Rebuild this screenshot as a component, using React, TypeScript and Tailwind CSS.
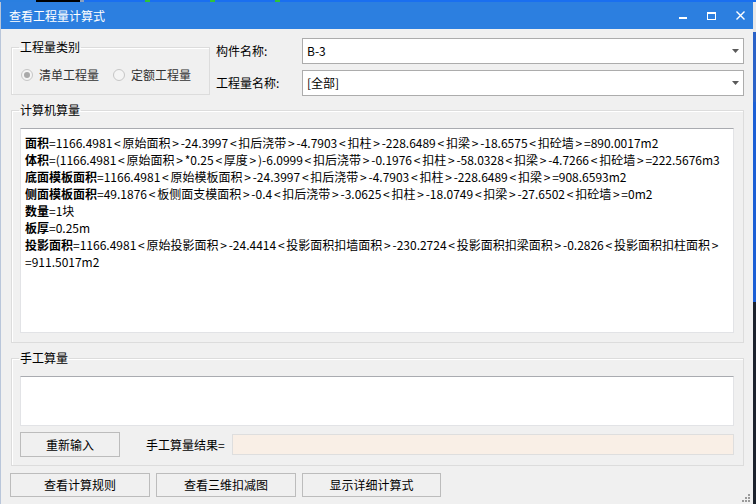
import React from "react";

const lines: [string, string][] = [
  ["面积", "=1166.4981<原始面积>-24.3997<扣后浇带>-4.7903<扣柱>-228.6489<扣梁>-18.6575<扣砼墙>=890.0017m2"],
  ["体积", "=(1166.4981<原始面积>*0.25<厚度>)-6.0999<扣后浇带>-0.1976<扣柱>-58.0328<扣梁>-4.7266<扣砼墙>=222.5676m3"],
  ["底面模板面积", "=1166.4981<原始模板面积>-24.3997<扣后浇带>-4.7903<扣柱>-228.6489<扣梁>=908.6593m2"],
  ["侧面模板面积", "=49.1876<板侧面支模面积>-0.4<扣后浇带>-3.0625<扣柱>-18.0749<扣梁>-27.6502<扣砼墙>=0m2"],
  ["数量", "=1块"],
  ["板厚", "=0.25m"],
  ["投影面积", "=1166.4981<原始投影面积>-24.4414<投影面积扣墙面积>-230.2724<投影面积扣梁面积>-0.2826<投影面积扣柱面积>"],
  ["", "=911.5017m2"],
];

// angle brackets in the original font are wider, pad them a bit
const Formula = ({ text }: { text: string }) => (
  <>
    {text.split(/([<>])/).map((part, i) =>
      part === "<" || part === ">" ? (
        <span key={i} className="px-[1.75px]">
          {part}
        </span>
      ) : (
        part
      )
    )}
  </>
);

const Combo = ({ value }: { value: string }) => (
  <div className="flex-1 h-[26px] bg-white border border-[#acacac] flex items-center justify-between pl-[4px] pr-[4px]">
    <span className="text-[12px] leading-[14px] text-black">{value}</span>
    <svg width="7" height="4" viewBox="0 0 7 4">
      <path d="M0 0H7L3.5 4Z" fill="#5a5a5a" />
    </svg>
  </div>
);

const Radio = ({ label, checked }: { label: string; checked?: boolean }) => (
  <div className="flex items-center gap-[6px]">
    <div className="w-[12px] h-[12px] rounded-full border border-[#c6c6c6] bg-[#f4f4f4] flex items-center justify-center">
      {checked && <div className="w-[6px] h-[6px] rounded-full bg-[#a9a9a9]" />}
    </div>
    <span className="text-[12px] leading-[14px] text-[#333]">{label}</span>
  </div>
);

const Button = ({ label, w }: { label: string; w: string }) => (
  <button className={`${w} h-[24px] border border-[#bcbcbc] bg-[#f0f0f0] text-[12px] leading-[14px] text-black flex items-center justify-center`}>
    {label}
  </button>
);

const App = () => {
  return (
    <div className="w-[756px] h-[504px] overflow-hidden bg-[#1d66da] flex flex-col font-['Noto_Sans_CJK_SC',sans-serif]">
      {/* desktop strip above the window */}
      <div className="h-[2px] flex shrink-0">
        <div className="w-[36px] bg-[#2a7fe0]" />
        <div className="w-[44px] bg-black" />
        <div className="w-[4px] bg-[#8aa0c0]" />
        <div className="w-[61px] bg-[#1a6ff0]" />
        <div className="w-[5px] bg-[#2fc23a]" />
        <div className="w-[60px] bg-[#1a6ff0]" />
        <div className="w-[5px] bg-[#2fc23a]" />
        <div className="w-[60px] bg-[#1a6ff0]" />
        <div className="w-[5px] bg-[#2fc23a]" />
        <div className="flex-1 bg-[#1a6ff0]" />
      </div>
      <div className="flex flex-1">
        <div className="w-[753px] bg-[#f0f0f0] border-l border-[#b9c6da] flex flex-col relative">
          {/* title bar */}
          <div className="h-[27px] bg-[#2c7fe0] flex items-center justify-between pl-[8px] pr-[8px]">
            <span className="text-[12px] leading-[14px] text-white">查看工程量计算式</span>
            <div className="flex items-center gap-[20px]">
              <svg width="8" height="8" viewBox="0 0 8 8">
                <rect x="0" y="5" width="8" height="2" fill="white" />
              </svg>
              <svg width="9" height="8" viewBox="0 0 9 8">
                <rect x="0.5" y="0.5" width="8" height="7" fill="none" stroke="white" />
                <rect x="0" y="0" width="9" height="2" fill="white" />
              </svg>
              <svg width="9" height="9" viewBox="0 0 9 9">
                <path d="M0.5 0.5L8.5 8.5M8.5 0.5L0.5 8.5" stroke="white" strokeWidth="1.4" />
              </svg>
            </div>
          </div>

          <div className="flex flex-col pl-[10px] pr-[9px]">
            {/* top row */}
            <div className="flex items-start pt-[9px]">
              <fieldset className="mt-[2px] w-[199px] border border-[#dcdcdc] shadow-[inset_1px_1px_0_#fff] pl-[8px] pt-[14px] pb-[12px]">
                <legend className="-ml-[1px] px-[1px] text-[12px] leading-[14px] text-black">工程量类别</legend>
                <div className="flex items-center gap-[14px] ml-[1px]">
                  <Radio label="清单工程量" checked />
                  <Radio label="定额工程量" />
                </div>
              </fieldset>
              <div className="flex-1 ml-[6px] flex flex-col gap-[6px]">
                <div className="flex items-center">
                  <span className="w-[86px] text-[12px] leading-[14px] text-black">构件名称:</span>
                  <Combo value="B-3" />
                </div>
                <div className="flex items-center">
                  <span className="w-[86px] text-[12px] leading-[14px] text-black">工程量名称:</span>
                  <Combo value="[全部]" />
                </div>
              </div>
            </div>

            {/* computer calc */}
            <fieldset className="mt-[7px] border border-[#dcdcdc] shadow-[inset_1px_1px_0_#fff] pl-[8px] pr-[9px] pt-[11px] pb-[9px]">
              <legend className="-ml-[1px] px-[1px] text-[12px] leading-[14px] text-black">计算机算量</legend>
              <div className="h-[205px] bg-white border border-[#e2e3e6] border-t-[#a9abb0] pl-[4px] pt-[5px] text-[12px] leading-[17px] text-black whitespace-pre">
                {lines.map(([b, r], i) => (
                  <div key={i}>
                    {b && <span className="font-bold">{b}</span>}
                    <Formula text={r} />
                  </div>
                ))}
              </div>
            </fieldset>

            {/* manual calc */}
            <fieldset className="mt-[8px] border border-[#dcdcdc] shadow-[inset_1px_1px_0_#fff] pl-[8px] pr-[9px] pt-[11px] pb-[8px]">
              <legend className="-ml-[1px] px-[1px] text-[12px] leading-[14px] text-black">手工算量</legend>
              <div className="h-[50px] bg-white border border-[#e2e3e6] border-t-[#a9abb0]" />
              <div className="mt-[6px] flex items-center h-[25px]">
                <button className="w-[100px] h-[25px] border border-[#bcbcbc] bg-[#f0f0f0] text-[12px] leading-[14px] text-black">
                  重新输入
                </button>
                <span className="ml-[26px] w-[86px] text-[12px] leading-[14px] text-black">手工算量结果=</span>
                <div className="flex-1 h-[21px] bg-[#f9efe6] border border-[#dedede]" />
              </div>
            </fieldset>

            {/* bottom buttons */}
            <div className="mt-[7px] -ml-[1px] flex gap-[6px]">
              <Button label="查看计算规则" w="w-[140px]" />
              <Button label="查看三维扣减图" w="w-[140px]" />
              <Button label="显示详细计算式" w="w-[139px]" />
            </div>
          </div>

          {/* resize grip */}
          <svg className="absolute right-[2px] bottom-[1px]" width="9" height="9" viewBox="0 0 9 9">
            <rect x="6" y="0" width="2" height="2" fill="#9a9a9a" />
            <rect x="3" y="3" width="2" height="2" fill="#9a9a9a" />
            <rect x="6" y="3" width="2" height="2" fill="#9a9a9a" />
            <rect x="0" y="6" width="2" height="2" fill="#9a9a9a" />
            <rect x="3" y="6" width="2" height="2" fill="#9a9a9a" />
            <rect x="6" y="6" width="2" height="2" fill="#9a9a9a" />
          </svg>
        </div>
        {/* desktop strip on the right */}
        <div className="flex-1 flex flex-col">
          <div className="h-[30px] bg-[#e8e8e8]" />
          <div className="h-[70px] bg-[#2a62c8]" />
          <div className="h-[200px] bg-[#1b5fd6]" />
          <div className="flex-1 bg-[#1c222c]" />
        </div>
      </div>
    </div>
  );
};

export default App;
